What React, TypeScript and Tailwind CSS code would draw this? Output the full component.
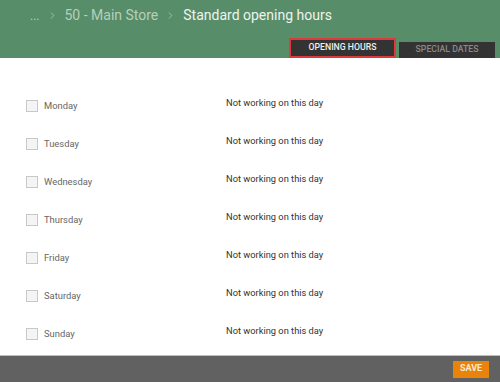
import { ChevronRight } from "lucide-react";

const days = ["Monday", "Tuesday", "Wednesday", "Thursday", "Friday", "Saturday", "Sunday"];

export default function App() {
  return (
    <div className="flex h-[382px] w-[500px] flex-col bg-white font-['Roboto',sans-serif]">
      <header className="flex h-[58px] flex-col bg-[#578d68]">
        <div className="flex h-[31px] items-center pl-[30px] text-[14px] text-[#b6cfbd]">
          <span className="text-[12px]">...</span>
          <ChevronRight className="mx-[7px] h-[11px] w-[11px]" strokeWidth={1.6} />
          <span>50 - Main Store</span>
          <ChevronRight className="mx-[7px] h-[11px] w-[11px]" strokeWidth={1.6} />
          <span className="text-[#eef4ef]">Standard opening hours</span>
        </div>
        <div className="mt-auto flex items-end justify-end gap-[3px] pr-[5px]">
          <button className="h-[20px] w-[107px] border-2 border-[#e0393b] bg-[#333333] text-[8.7px] font-medium text-[#eeeeee]">
            OPENING HOURS
          </button>
          <button className="h-[16px] w-[96px] bg-[#333333] text-[8.7px] font-medium text-[#8a8a8a]">
            SPECIAL DATES
          </button>
        </div>
      </header>

      <main className="flex-1 pt-[28px]">
        {days.map((day) => (
          <div key={day} className="flex h-[38px] items-start">
            <label className="flex w-[226px] items-center pl-[26px] pt-[13px]">
              <span className="h-[12px] w-[12px] border border-[#c8c8c8] bg-[#f4f4f4]" />
              <span className="ml-[6px] text-[9.4px] text-[#666666]">{day}</span>
            </label>
            <span className="pt-[10px] text-[9.3px] text-[#333333]">Not working on this day</span>
          </div>
        ))}
      </main>

      <footer className="flex h-[27px] items-center justify-end border-t border-[#bdbdbd] bg-[#616161] pr-[11px]">
        <button className="h-[17px] w-[36px] bg-[#e8830c] text-[9px] font-bold text-[#fbe9d4]">SAVE</button>
      </footer>
    </div>
  );
}
